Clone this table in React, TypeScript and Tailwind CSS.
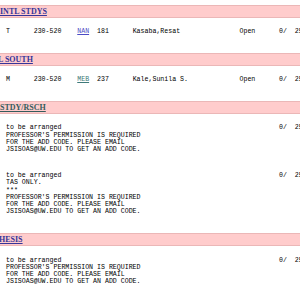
import React from 'react';

const mono =
  "font-['Liberation_Mono',monospace] text-[6.6px] leading-[7.25px] text-black whitespace-pre";

type HeaderProps = { label: string; linkClass: string; first?: boolean };

const SectionHeader: React.FC<HeaderProps> = ({ label, linkClass, first }) => (
  <div
    className={`${first ? 'mt-[5px]' : 'mt-[9px]'} h-[13px] bg-[#ffcccc] border-y border-[#ebb7b7] flex items-center overflow-hidden`}
  >
    <a
      href="#"
      className={`font-['Liberation_Serif',serif] font-bold text-[8px] leading-none underline whitespace-nowrap ${linkClass}`}
    >
      {label}
    </a>
  </div>
);

const seats = '0/  25';

type RowProps = { day: string; bldg: string; bldgClass: string; room: string; name: string };

const CourseRow: React.FC<RowProps> = ({ day, bldg, bldgClass, room, name }) => (
  <div className={`pt-[10.4px] pb-[8.4px] pl-[6px] ${mono}`}>
    {`${day}      230-520    `}
    <a href="#" className={`underline ${bldgClass}`}>
      {bldg}
    </a>
    {`  ${room}      ${name.padEnd(27)}${'Open'.padEnd(10)}${seats}`}
  </div>
);

const NoteBlock: React.FC<{ notes: string[] }> = ({ notes }) => (
  <div className={`pt-[10.4px] pb-[8.4px] pl-[6px] ${mono}`}>
    <div>{`${'to be arranged'.padEnd(69)}${seats}`}</div>
    {notes.map((n, i) => (
      <div key={i}>{n}</div>
    ))}
  </div>
);

const permission = [
  "PROFESSOR'S PERMISSION IS REQUIRED",
  'FOR THE ADD CODE. PLEASE EMAIL',
  'JSISOAS@UW.EDU TO GET AN ADD CODE.',
];

export default function App() {
  return (
    <div className="w-[300px] h-[300px] overflow-hidden bg-white">
      <SectionHeader first label="INTL STDYS" linkClass="text-[#35359a]" />
      <CourseRow day="T" bldg="NAN" bldgClass="text-[#4b4bc4]" room="181" name="Kasaba,Resat" />

      <SectionHeader label="L SOUTH" linkClass="text-[#35359a] ml-[-2px]" />
      <CourseRow day="M" bldg="MEB" bldgClass="text-[#3f7a7a]" room="237" name="Kale,Sunila S." />

      <SectionHeader label="STDY/RSCH" linkClass="text-[#345c5c]" />
      <NoteBlock notes={permission} />
      <NoteBlock notes={['TAS ONLY.', '***', ...permission]} />

      <SectionHeader label="HESIS" linkClass="text-[#35359a] ml-[-1px]" />
      <NoteBlock notes={permission} />
    </div>
  );
}
